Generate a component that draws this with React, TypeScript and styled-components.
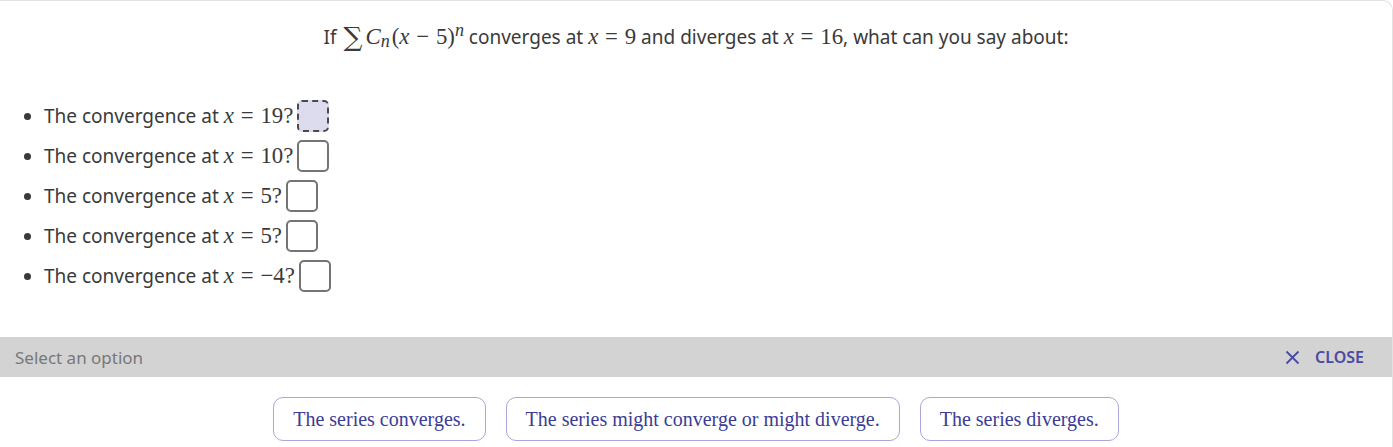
import * as React from "react";
import styled, { createGlobalStyle } from "styled-components";

const GlobalStyle = createGlobalStyle`
  html, body {
    margin: 0;
    padding: 0;
    background: #ffffff;
  }
  body {
    font-family: "Noto Sans", "Open Sans", sans-serif;
    color: #3a3a3a;
  }
`;

const items = ["19", "10", "5", "5", "−4"];

const options = [
  "The series converges.",
  "The series might converge or might diverge.",
  "The series diverges.",
];

const App = () => {
  return (
    <>
      <GlobalStyle />
      <Panel>
        <Title>
          If <Sum>∑</Sum>
          <MathI>C</MathI>
          <Sub>n</Sub>
          <MathR>(</MathR>
          <MathI>x</MathI>
          <Op>−</Op>
          <MathR>5)</MathR>
          <Sup>n</Sup> converges at <MathI>x</MathI>
          <Op>=</Op>
          <MathR>9</MathR> and diverges at <MathI>x</MathI>
          <Op>=</Op>
          <MathR>16</MathR>, what can you say about:
        </Title>
        <List>
          {items.map((v, i) => (
            <Item key={i}>
              The convergence at <MathI>x</MathI>
              <Op>=</Op>
              <MathR>{v}?</MathR>
              <AnswerBox active={i === 0} />
            </Item>
          ))}
        </List>
        <OptionBar>
          <Hint>Select an option</Hint>
          <CloseButton>
            <svg width="15" height="15" viewBox="0 0 15 15">
              <path
                d="M1.5 1.5 L13.5 13.5 M13.5 1.5 L1.5 13.5"
                stroke="#4a4aa0"
                strokeWidth="1.8"
                fill="none"
              />
            </svg>
            CLOSE
          </CloseButton>
        </OptionBar>
        <ButtonRow>
          {options.map((o) => (
            <OptionButton key={o}>{o}</OptionButton>
          ))}
        </ButtonRow>
      </Panel>
    </>
  );
};

const Panel = styled.div`
  box-sizing: border-box;
  width: 1393px;
  height: 447px;
  border-top: 1px solid #e2e2e2;
  border-right: 1px solid #e2e2e2;
  border-top-right-radius: 10px;
  overflow: hidden;
  display: flex;
  flex-direction: column;
`;

const Title = styled.div`
  margin-top: 14px;
  line-height: 40px;
  font-size: 19px;
  text-align: center;
  white-space: nowrap;
`;

const MathI = styled.span`
  font-family: "Liberation Serif", "DejaVu Serif", serif;
  font-style: italic;
  font-size: 1.2em;
`;

const MathR = styled.span`
  font-family: "Liberation Serif", "DejaVu Serif", serif;
  font-size: 1.2em;
  white-space: pre;
`;

const Op = styled.span`
  font-family: "Liberation Serif", "DejaVu Serif", serif;
  font-size: 1.2em;
  padding: 0 0.3em;
`;

const Sum = styled.span`
  font-family: "DejaVu Serif", serif;
  font-size: 1.4em;
  margin: 0 3px 0 2px;
  position: relative;
  top: 2px;
`;

const Sub = styled.sub`
  font-family: "Liberation Serif", serif;
  font-style: italic;
  font-size: 0.95em;
  vertical-align: -3px;
  line-height: 0;
  margin-right: 2px;
`;

const Sup = styled.sup`
  font-family: "Liberation Serif", serif;
  font-style: italic;
  font-size: 0.95em;
  vertical-align: 8px;
  line-height: 0;
`;

const List = styled.ul`
  margin: 39px 0 0 0;
  padding-left: 44px;
  list-style: disc;
`;

const Item = styled.li`
  height: 40px;
  line-height: 40px;
  font-size: 19px;
  white-space: nowrap;
`;

const AnswerBox = styled.span<{ active?: boolean }>`
  display: inline-block;
  box-sizing: border-box;
  width: 32px;
  height: 32px;
  margin-left: 4px;
  vertical-align: middle;
  position: relative;
  top: -2px;
  border-radius: 5px;
  border: 2px ${(p) => (p.active ? "dashed #4a4a4a" : "solid #747474")};
  background: ${(p) => (p.active ? "#dcdcee" : "#ffffff")};
`;

const OptionBar = styled.div`
  margin-top: 41px;
  height: 40px;
  background: #d3d3d3;
  display: flex;
  align-items: center;
  justify-content: space-between;
  padding: 0 28px 0 15px;
`;

const Hint = styled.span`
  color: #787878;
  font-size: 17px;
`;

const CloseButton = styled.span`
  display: flex;
  align-items: center;
  gap: 15px;
  color: #4a4aa0;
  font-size: 16px;
  font-weight: 600;
`;

const ButtonRow = styled.div`
  display: flex;
  justify-content: center;
  gap: 20px;
  padding-top: 20px;
`;

const OptionButton = styled.button`
  height: 44px;
  padding: 0 19px;
  background: #ffffff;
  border: 1px solid #a9a6d9;
  border-radius: 10px;
  font-family: "Liberation Serif", "DejaVu Serif", serif;
  font-size: 20px;
  color: #3c3c96;
`;

export default App;
